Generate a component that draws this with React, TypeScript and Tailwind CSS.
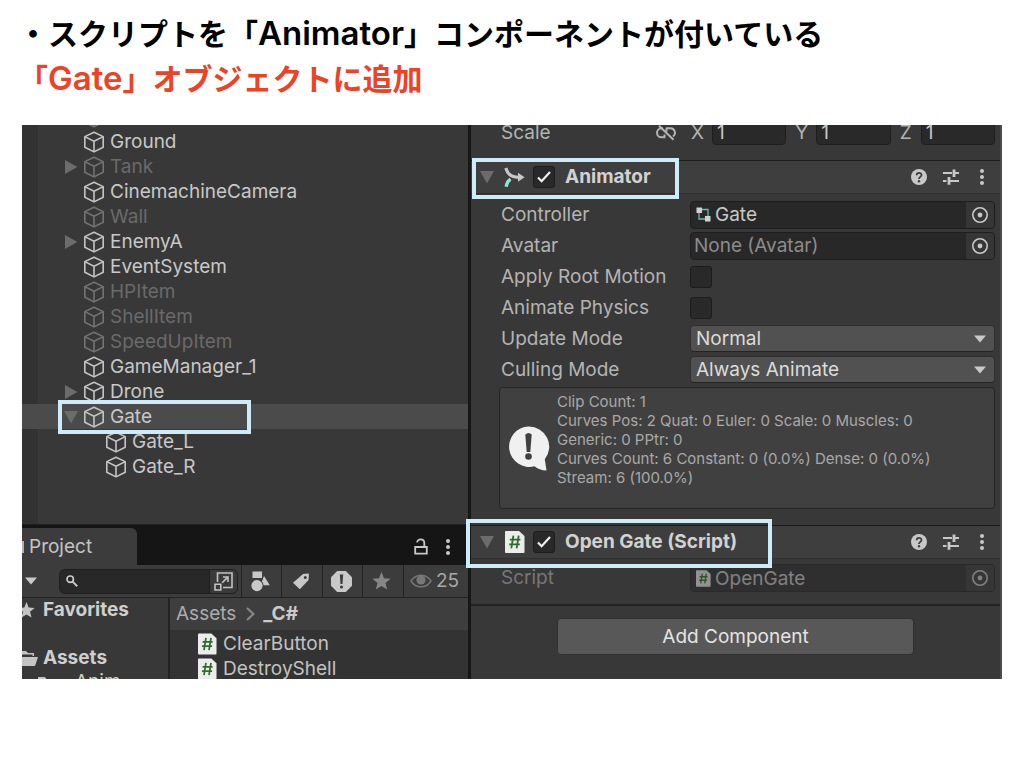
import React from "react";

type IconProps = { className?: string };

function CubeIcon({ className = "" }: IconProps) {
  return (
    <svg viewBox="0 0 22 22" className={"h-[22px] w-[22px] shrink-0 " + className} fill="none" stroke="currentColor" strokeWidth="1.6" strokeLinejoin="round" aria-hidden="true">
      <path d="M11 1.2 20.2 5.6V16.2L11 20.9 1.8 16.2V5.6Z" />
      <path d="M1.8 5.6 11 10.2 20.2 5.6M11 10.2V20.9" />
    </svg>
  );
}

function Triangle({ open, className = "" }: { open?: boolean; className?: string }) {
  return (
    <svg viewBox="0 0 14 14" className={"h-[14px] w-[14px] shrink-0 " + className} fill="currentColor" aria-hidden="true">
      {open ? <path d="M0 1H14L7 13.4Z" /> : <path d="M1 0 13.4 7 1 14Z" />}
    </svg>
  );
}

function Caret({ className = "" }: IconProps) {
  return (
    <svg viewBox="0 0 12 8" className={"h-2 w-3 shrink-0 " + className} fill="#c9c9c9" aria-hidden="true">
      <path d="M0 .5H12L6 7.5Z" />
    </svg>
  );
}

function Kebab() {
  return (
    <svg viewBox="0 0 4 16" className="h-4 w-1" fill="#c8c8c8" aria-hidden="true">
      <circle cx="2" cy="2" r="2" />
      <circle cx="2" cy="8" r="2" />
      <circle cx="2" cy="14" r="2" />
    </svg>
  );
}

function ScriptIcon({ className = "" }: IconProps) {
  return (
    <svg viewBox="0 0 20 22" className={"shrink-0 " + className} aria-hidden="true">
      <path d="M1 0H14L19.5 5V21a1 1 0 0 1-1 1H1a1 1 0 0 1-1-1V1A1 1 0 0 1 1 0Z" fill="#ececec" />
      <path d="M8.4 4.6 6.3 17.4M13.7 4.6 11.6 17.4M4.8 8.7H15.4M4.2 13.3H14.8" stroke="#2f6b2a" strokeWidth="1.8" fill="none" />
    </svg>
  );
}

function AnimatorIcon() {
  return (
    <svg viewBox="0 0 21 21" className="h-[21px] w-[21px] shrink-0" fill="none" aria-hidden="true">
      <path d="M1.800 1C3.500 6.500 6 9.800 14.500 10.300" stroke="#c8c8c8" strokeWidth="3.200" />
      <path d="M14 5.800 20.600 10.300 14 14.800Z" fill="#c8c8c8" />
      <path d="M6.600 12.200C4.200 13.500 2.800 16 2.200 19.800" stroke="#84ecd4" strokeWidth="3.400" />
    </svg>
  );
}

function ControllerIcon() {
  return (
    <svg viewBox="0 0 15 15" className="h-[15px] w-[15px] shrink-0" fill="none" aria-hidden="true">
      <path d="M6 2.5H12V9M3 5V12H9" stroke="#6fb8a6" strokeWidth="1.3" />
      <path d="M.5.5H6V6H.5ZM9 9H14.5V14.5H9Z" fill="#d2d2d2" />
    </svg>
  );
}

function LinkOffIcon() {
  return (
    <svg viewBox="0 0 20 16" className="h-4 w-5 shrink-0" fill="none" stroke="#b4b4b4" strokeWidth="2" aria-hidden="true">
      <path d="M7 3.300H5.500A4.500 4.500 0 0 0 5.500 12.300H8.500V9.500M10 3.300H14.500A4.500 4.500 0 0 1 17 11.500M10.500 3.300V6.500M3 .8 17.500 14.800" />
    </svg>
  );
}

function HelpIcon() {
  return (
    <svg viewBox="0 0 16 16" className="h-4 w-4" aria-hidden="true">
      <circle cx="8" cy="8" r="8" fill="#c8c8c8" />
      <path d="M5.600 6.200C5.600 3 10.500 3 10.500 6.100 10.500 7.900 8 7.900 8 10" fill="none" stroke="#3e3e3e" strokeWidth="1.800" />
      <circle cx="8" cy="12.300" r="1.200" fill="#3e3e3e" />
    </svg>
  );
}

function PresetIcon() {
  return (
    <svg viewBox="0 0 16 16" className="h-4 w-4" stroke="#c8c8c8" fill="none" aria-hidden="true">
      <path d="M0 4H9M11 4H16M0 12H3.500M6 12H16" strokeWidth="1.800" />
      <path d="M11 .5V8M6 8V15.800" strokeWidth="2.800" />
    </svg>
  );
}

function TargetIcon() {
  return (
    <svg viewBox="0 0 16 16" className="h-4 w-4" aria-hidden="true">
      <circle cx="8" cy="8" r="7.200" fill="none" stroke="#c8c8c8" strokeWidth="1.600" />
      <circle cx="8" cy="8" r="2.400" fill="#c8c8c8" />
    </svg>
  );
}

function StarIcon({ className = "" }: IconProps) {
  return (
    <svg viewBox="0 0 20 19" className={"shrink-0 " + className} fill="currentColor" aria-hidden="true">
      <path d="M10 0 12.6 6.6 19.6 7.1 14.2 11.6 16 18.5 10 14.7 4 18.5 5.8 11.6.4 7.1 7.4 6.6Z" />
    </svg>
  );
}

function Outline({ className }: { className: string }) {
  return <div className={"pointer-events-none absolute z-10 border-4 border-[#cdebf9] " + className} />;
}

type Node = { name: string; off?: boolean; fold?: "open" | "closed"; child?: boolean; selected?: boolean };

const nodes: Node[] = [
  { name: "", off: true },
  { name: "Ground" },
  { name: "Tank", off: true, fold: "closed" },
  { name: "CinemachineCamera" },
  { name: "Wall", off: true },
  { name: "EnemyA", fold: "closed" },
  { name: "EventSystem" },
  { name: "HPItem", off: true },
  { name: "ShellItem", off: true },
  { name: "SpeedUpItem", off: true },
  { name: "GameManager_1" },
  { name: "Drone", fold: "closed" },
  { name: "Gate", fold: "open", selected: true },
  { name: "Gate_L", child: true },
  { name: "Gate_R", child: true },
];

function Hierarchy() {
  return (
    <ul className="flex h-[399px] flex-col justify-end overflow-hidden bg-[linear-gradient(to_right,#323232_16px,#383838_16px)] pb-[45px]">
      {nodes.map((n, i) => (
        <li
          key={i}
          className={
            "relative flex h-[25px] shrink-0 items-center " +
            (n.child ? "pl-[83px] " : "pl-[42px] ") +
            (n.selected ? "bg-[#4b4b4b] " : "") +
            (n.off ? "text-[#6a6a6a]" : "text-[#c8c8c8]")
          }
        >
          {!n.child && (
            <span className="w-[19px]">{n.fold && <Triangle open={n.fold === "open"} className="text-[#6c6c6c]" />}</span>
          )}
          <CubeIcon className={n.off ? "text-[#737373]" : "text-[#c4c4c4]"} />
          <span className="pl-[5px]">{n.name}</span>
          {n.selected && <Outline className="-top-1 left-9 h-[34px] w-[193px]" />}
        </li>
      ))}
    </ul>
  );
}

const cell = "flex h-full items-center justify-center border-l border-[#222] pr-[3px]";

function Project() {
  return (
    <section className="flex min-h-0 flex-1 flex-col border-t border-[#202020]">
      <div className="flex h-10 shrink-0 items-end bg-[#151515]">
        <div className="flex h-[37px] w-[115px] items-center gap-[5px] rounded-tr-md bg-[#3c3c3c] pt-px text-[#c4c4c4]">
          <span className="h-3 w-[2px] bg-[#b0b0b0]" />
          Project
        </div>
        <div className="ml-auto flex h-full items-center gap-[18px] pr-[18px] pt-[3px]">
          <button type="button" aria-label="Lock">
            <svg viewBox="0 0 14 17" className="h-[17px] w-[14px]" fill="none" stroke="#c8c8c8" strokeWidth="1.8" aria-hidden="true">
              <path d="M1.2 9H12.8V15.6H1.2ZM3.2 4.5C3.2 .3 10.3 0 10.3 5V9" />
            </svg>
          </button>
          <button type="button" aria-label="Menu"><Kebab /></button>
        </div>
      </div>
      <div className="flex h-8 shrink-0 items-center bg-[#3c3c3c]">
        <button type="button" aria-label="Create" className="w-[37px] pl-[3px]"><Caret /></button>
        <div className="mr-[3px] flex h-[25px] min-w-0 flex-1 items-center overflow-hidden rounded-md border border-[#1f1f1f] bg-[#282828]">
          <svg viewBox="0 0 12 12" className="ml-[6px] h-3 w-3 shrink-0" fill="none" stroke="#c8c8c8" strokeWidth="1.7" aria-hidden="true">
            <circle cx="4.2" cy="4.2" r="3.2" />
            <path d="M6.6 6.6 11.2 11.2" strokeWidth="2" />
          </svg>
          <input type="text" aria-label="Search assets" className="h-full min-w-0 flex-1 bg-transparent px-2 outline-none" />
          <button type="button" aria-label="Open search window" className="flex h-full w-7 items-center justify-center border-l border-[#1f1f1f] bg-[#3a3a3a]">
            <svg viewBox="0 0 19 19" className="h-[19px] w-[19px]" fill="none" stroke="#c4c4c4" strokeWidth="1.6" aria-hidden="true">
              <path d="M3.500 10V1H18V15.500H9M1 12.300H6.800V18H1ZM8.200 10.800 13.500 5.400M9 5H14V10" />
            </svg>
          </button>
        </div>
        <button type="button" aria-label="Filter by type" className={cell + " w-[40px]"}>
          <svg viewBox="0 0 19 21" className="h-[21px] w-[19px]" fill="#c8c8c8" aria-hidden="true">
            <path d="M1.500 .5H11V7H1.500ZM13 5 18.800 14.200H9.500Z" />
            <circle cx="6" cy="14.600" r="6.600" fill="#3c3c3c" />
            <circle cx="6" cy="14.600" r="5.600" />
          </svg>
        </button>
        <button type="button" aria-label="Filter by label" className={cell + " w-[41px]"}>
          <svg viewBox="0 0 16 17" className="h-[17px] w-4" aria-hidden="true">
            <path fill="#c8c8c8" fillRule="evenodd" d="M10 1 15 .6C15.7.6 16 1 15.9 1.7L15.6 7 6.8 16.2 0 9.7ZM12.3 3A1.5 1.5 0 1 0 12.3 6 1.5 1.5 0 1 0 12.3 3Z" />
          </svg>
        </button>
        <button type="button" aria-label="Filter by import log" className={cell + " w-[40px]"}>
          <svg viewBox="0 0 21 21" className="h-[21px] w-[21px]" aria-hidden="true">
            <path d="M6.2 0H14.8L21 6.2V14.8L14.8 21H6.2L0 14.8V6.2Z" fill="#c8c8c8" />
            <path d="M8.8 3.5H12.2L11.5 13H9.5Z" fill="#3c3c3c" />
            <circle cx="10.5" cy="16" r="1.6" fill="#3c3c3c" />
          </svg>
        </button>
        <button type="button" aria-label="Save search" className={cell + " w-[41px] text-[#868686]"}><StarIcon className="h-[18px] w-[19px]" /></button>
        <button type="button" aria-label="Hidden packages" className={cell + " w-[65px] gap-1 text-[#a8a8a8]"}>
          <svg viewBox="0 0 22 14" className="h-[14px] w-[22px]" aria-hidden="true">
            <path d="M1 7C6-.8 16-.8 21 7 16 14.8 6 14.8 1 7Z" fill="none" stroke="#777" strokeWidth="1.5" />
            <circle cx="11" cy="6" r="4.6" fill="#777" />
          </svg>
          25
        </button>
      </div>
      <div className="flex min-h-0 flex-1 border-t border-[#232323]">
        <div className="w-[148px] shrink-0 overflow-hidden border-r-2 border-[#232323] bg-[#383838] font-bold text-[#cfcfcf]">
          <div className="flex h-6 items-center"><StarIcon className="-ml-1 mr-2 h-4 w-[17px] text-[#c4c4c4]" />Favorites</div>
          <div className="mt-6 flex h-6 items-center">
            <svg viewBox="0 0 16 15" className="mr-[5px] h-[15px] w-4" fill="#c4c4c4" aria-hidden="true">
              <path d="M0 0H4L6 2H12V5H10.5V3.5H0ZM0 6H16L13 15H0Z" />
            </svg>
            Assets
          </div>
          <div className="flex h-6 items-center pl-4 font-normal">
            <svg viewBox="0 0 16 15" className="mr-[21px] mt-1 h-[15px] w-4" fill="#c4c4c4" aria-hidden="true"><path d="M0 0H7L9 3H16V15H0Z" /></svg>
            Anim
          </div>
        </div>
        <div className="min-w-0 flex-1 overflow-hidden bg-[#333]">
          <nav className="flex h-8 items-center gap-[10px] bg-[#3e3e3e] pl-[6px] text-[#acacac]">
            <a href="#assets">Assets</a>
            <svg viewBox="0 0 9 14" className="h-[14px] w-[9px]" fill="none" stroke="#888" strokeWidth="2.2" aria-hidden="true"><path d="M1 1 7.500 7 1 13" /></svg>
            <a href="#c-sharp" className="-ml-[2px] font-bold text-[#cacaca]">_C#</a>
          </nav>
          <ul className="pt-px text-[#c2c2c2]">
            {["ClearButton", "DestroyShell"].map((f) => (
              <li key={f} className="flex h-[25px] items-center gap-[6px] pl-7"><ScriptIcon className="h-[22px] w-[19px]" />{f}</li>
            ))}
          </ul>
        </div>
      </div>
    </section>
  );
}

function CheckBox({ id, checked }: { id: string; checked?: boolean }) {
  return (
    <span className="grid h-[22px] w-[22px] shrink-0 place-items-center">
      <input
        id={id}
        type="checkbox"
        defaultChecked={checked}
        className="peer col-start-1 row-start-1 h-[22px] w-[22px] appearance-none rounded-[3px] border border-[#1c1c1c] bg-[#292929]"
      />
      <svg viewBox="0 0 14 12" className="pointer-events-none invisible col-start-1 row-start-1 h-3 w-[14px] peer-checked:visible" fill="none" stroke="#f0f0f0" strokeWidth="2.2" aria-hidden="true">
        <path d="M1 6.5 4.6 10.2 13 1" />
      </svg>
    </span>
  );
}

function ComponentHeader({ id, title, icon, outline }: { id: string; title: string; icon: React.ReactNode; outline: string }) {
  return (
    <div className="relative flex h-[34px] items-center border-t border-b border-t-[#1a1a1a] border-b-[#303030] bg-[#3e3e3e] pl-[9px] pr-4">
      <button type="button" aria-label={"Fold " + title} className="mr-[10px]"><Triangle open className="text-[#6c6c6c]" /></button>
      <span className="mr-2 flex w-[21px] justify-center">{icon}</span>
      <CheckBox id={id} checked />
      <label htmlFor={id} className="pl-[10px] font-bold text-[#d2d2d2]">{title}</label>
      <div className="ml-auto flex items-center">
        <button type="button" aria-label="Help" className="mr-4"><HelpIcon /></button>
        <button type="button" aria-label="Presets" className="mr-[21px]"><PresetIcon /></button>
        <button type="button" aria-label="More"><Kebab /></button>
      </div>
      <Outline className={outline} />
    </div>
  );
}

function Row({ id, label, children, className = "h-[31px]" }: { id: string; label: string; children: React.ReactNode; className?: string }) {
  return (
    <div className={"flex items-center " + className}>
      <label htmlFor={id} className="w-[189px] shrink-0 text-[#b4b4b4]">{label}</label>
      {children}
    </div>
  );
}

function ObjectField({ id, value, icon, dim }: { id: string; value: string; icon?: React.ReactNode; dim?: boolean }) {
  return (
    <div className="flex h-7 min-w-0 flex-1 items-center overflow-hidden rounded-[4px] border border-[#1e1e1e] bg-[#282828]">
      {icon && <span className="pl-[5px]">{icon}</span>}
      <input id={id} readOnly value={value} className={"h-full min-w-0 flex-1 bg-transparent outline-none " + (icon ? "pl-1 " : "pl-[3px] ") + (dim ? "text-[#8c8c8c]" : "text-[#c8c8c8]")} />
      <button type="button" aria-label={"Pick " + id} className="flex h-full w-7 items-center justify-center bg-[#363636]"><TargetIcon /></button>
    </div>
  );
}

function Dropdown({ id, value }: { id: string; value: string }) {
  return (
    <div className="grid h-[27px] min-w-0 flex-1 items-center">
      <select id={id} defaultValue={value} className="col-start-1 row-start-1 h-[27px] w-full appearance-none rounded-[4px] border border-[#303030] border-b-[#242424] bg-[#515151] pl-[5px] text-[#dcdcdc]">
        <option>{value}</option>
      </select>
      <Caret className="pointer-events-none col-start-1 row-start-1 mr-[9px] justify-self-end" />
    </div>
  );
}

function Inspector() {
  return (
    <section>
      <div className="h-[35px]">
        <div className="flex h-5 items-end overflow-hidden pl-[30px] pr-[5px]">
          <div className="flex h-[25px] min-w-0 flex-1 shrink-0 items-center text-[#b4b4b4]">
            <span className="w-[155px] shrink-0">Scale</span>
            <LinkOffIcon />
            <div className="ml-[15px] flex min-w-0 flex-1 gap-[9px]">
              {["X", "Y", "Z"].map((axis) => (
                <label key={axis} className="flex min-w-0 flex-1 items-center">
                  <span className="w-[21px] shrink-0">{axis}</span>
                  <input type="text" defaultValue="1" className="h-[25px] w-0 min-w-0 flex-1 rounded-[4px] border border-[#1e1e1e] bg-[#292929] pl-1 text-[#c8c8c8] outline-none" />
                </label>
              ))}
            </div>
          </div>
        </div>
      </div>

      <ComponentHeader id="animator" title="Animator" icon={<AnimatorIcon />} outline="-top-[3px] left-px h-[41px] w-[207px]" />
      <div className="pb-4 pl-[30px] pr-[5px] pt-[5px]">
        <Row id="controller" label="Controller"><ObjectField id="controller" value="Gate" icon={<ControllerIcon />} /></Row>
        <Row id="avatar" label="Avatar"><ObjectField id="avatar" value="None (Avatar)" dim /></Row>
        <Row id="root-motion" label="Apply Root Motion"><CheckBox id="root-motion" /></Row>
        <Row id="physics" label="Animate Physics"><CheckBox id="physics" /></Row>
        <Row id="update" label="Update Mode"><Dropdown id="update" value="Normal" /></Row>
        <Row id="culling" label="Culling Mode"><Dropdown id="culling" value="Always Animate" /></Row>
        <div className="-ml-[2px] mt-[2px] flex h-[122px] rounded-[4px] border border-[#242424] bg-[#404040] pl-2 pt-1">
          <svg viewBox="0 0 42 46" className="mt-[34px] h-[46px] w-[42px] shrink-0" aria-hidden="true">
            <path fill="#f0f0f0" d="M20.500 .5A20.200 20.200 0 1 0 26.500 40.200C29.500 42.500 33.500 44.500 38.500 44.500L36.800 33.300A20.200 20.200 0 0 0 20.500 .5Z" />
            <path d="M17.300 8.500Q20.500 5.500 23.700 8.500L22.300 26H18.700Z" fill="#404040" />
            <circle cx="20.500" cy="30.500" r="3.300" fill="#404040" />
          </svg>
          <p className="pl-[7px] text-[15px] leading-[19px] text-[#a9a9a9]">
            Clip Count: 1<br />
            Curves Pos: 2 Quat: 0 Euler: 0 Scale: 0 Muscles: 0<br />
            Generic: 0 PPtr: 0<br />
            Curves Count: 6 Constant: 0 (0.0%) Dense: 0 (0.0%)<br />
            Stream: 6 (100.0%)
          </p>
        </div>
      </div>

      <ComponentHeader id="open-gate" title="Open Gate (Script)" icon={<ScriptIcon className="h-[22px] w-5" />} outline="-left-[5px] -top-[7px] h-[49px] w-[306px]" />
      <div className="border-b-2 border-[#222] pb-[11px] pl-[30px] pr-[5px] pt-1">
        <Row id="script" label="Script" className="h-[30px] opacity-50">
          <ObjectField id="script" value="OpenGate" icon={<ScriptIcon className="h-[17px] w-[15px]" />} />
        </Row>
      </div>
      <div className="px-[86px] pt-3">
        <button type="button" className="h-[37px] w-full rounded-[4px] border border-[#303030] bg-[#585858] text-[#e4e4e4]">Add Component</button>
      </div>
    </section>
  );
}

function Latin({ children }: { children: React.ReactNode }) {
  return <span className="font-['Inter',sans-serif] text-[33px] font-semibold leading-none">{children}</span>;
}

export default function App() {
  return (
    <main className="min-h-screen bg-white">
      <h1 className="h-[125px] pl-[18px] pt-[10px] font-['Noto_Sans_CJK_JP',sans-serif] text-[30px] font-bold leading-[45px] text-black">
        ・スクリプトを「<Latin>Animator</Latin>」コンポーネントが付いている
        <br />
        <span className="text-[#ee4227]">「<Latin>Gate</Latin>」オブジェクトに追加</span>
      </h1>
      <div className="mx-[22px] grid h-[554px] grid-cols-[446px_minmax(0,1fr)] overflow-hidden bg-[#383838] font-['Inter',sans-serif] text-[19px] leading-6">
        <div className="flex min-h-0 flex-col">
          <Hierarchy />
          <Project />
        </div>
        <div className="border-l-[3px] border-r-2 border-l-[#171717] border-r-[#4c4c4c]">
          <Inspector />
        </div>
      </div>
    </main>
  );
}
